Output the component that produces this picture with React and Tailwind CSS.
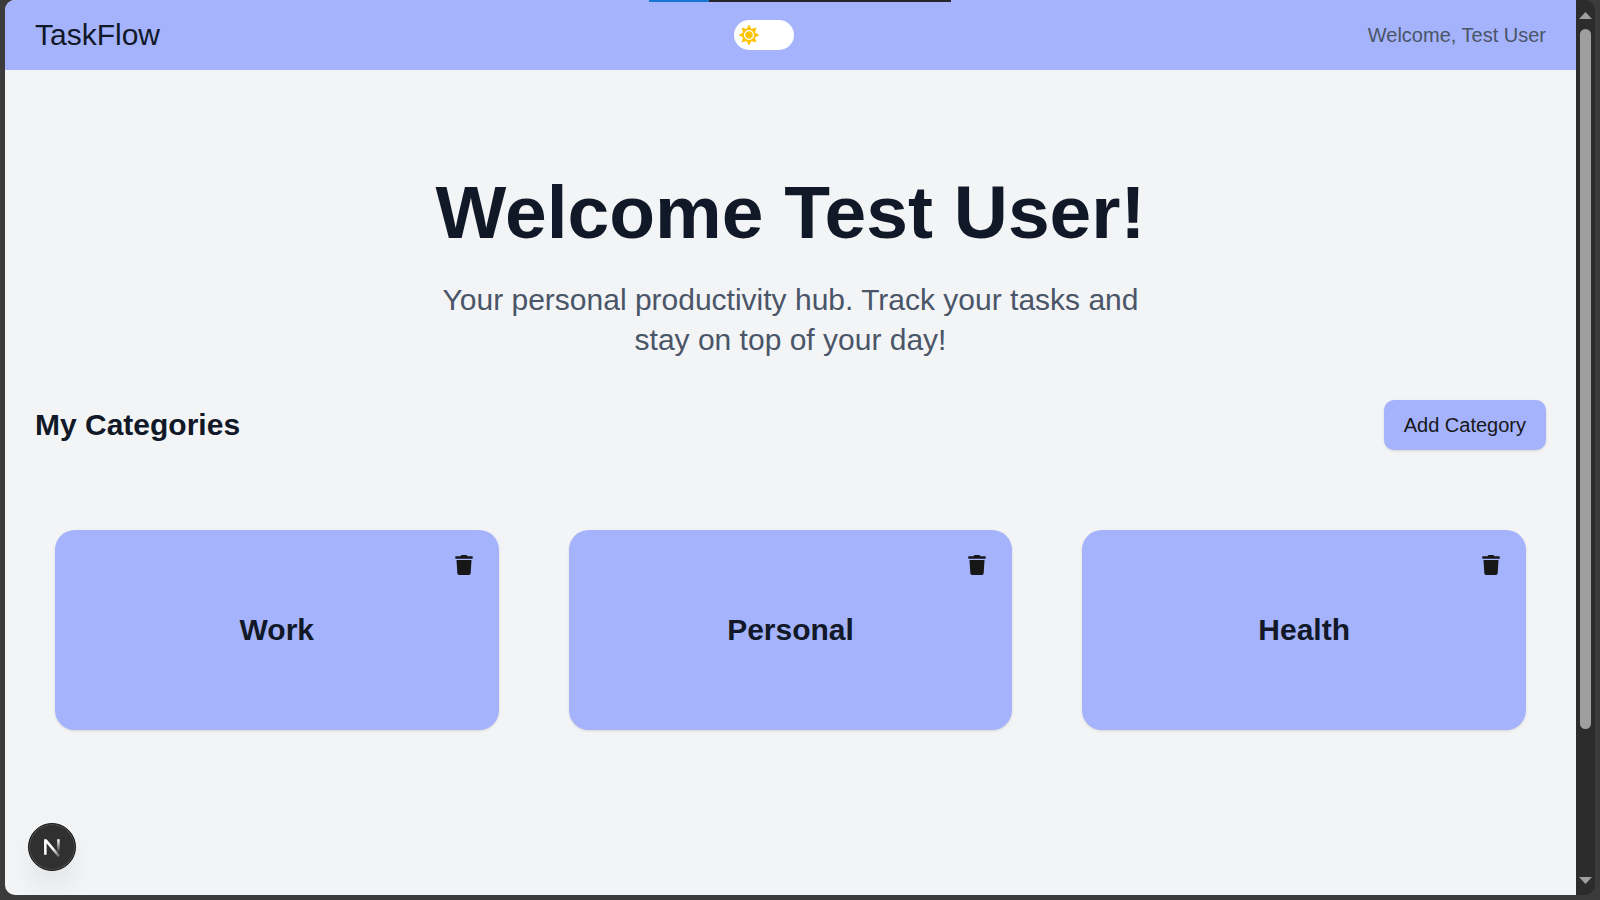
import React from "react";
import { FaSun, FaTrash } from "react-icons/fa";

const categories = ["Work", "Personal", "Health"];

function Header() {
  return (
    <header className="flex h-[70px] items-center justify-between bg-[#a5b3fc] px-[30px]">
      <div className="text-3xl text-[#111827]">TaskFlow</div>
      <button
        type="button"
        role="switch"
        aria-checked="false"
        aria-label="Dark mode"
        className="flex h-[30px] w-[60px] items-center rounded-full bg-white px-[5px]"
      >
        <FaSun className="size-5 text-[#fdc307]" />
      </button>
      <p className="text-xl text-[#4a5568]">Welcome, Test User</p>
    </header>
  );
}

function CategoryCard({ name }) {
  return (
    <article className="relative flex h-[200px] items-center justify-center rounded-[20px] bg-[#a5b3fc] shadow-sm">
      <h3 className="text-3xl font-bold text-[#111827]">{name}</h3>
      <button
        type="button"
        aria-label={`Delete ${name}`}
        className="absolute top-[25px] right-[25px] flex size-5 items-center justify-center text-[#171717]"
      >
        <FaTrash className="size-5" />
      </button>
    </article>
  );
}

function Scrollbar() {
  return (
    <div className="flex w-[19px] shrink-0 flex-col items-center bg-[#2c2c2c] pt-3 pb-[11px]" aria-hidden="true">
      <svg className="h-[7px] w-[13px] shrink-0" viewBox="0 0 13 7">
        <path d="M6.500 0 L13 7 H0Z" fill="#9f9f9f" />
      </svg>
      <div className="mt-2.5 flex w-full grow flex-col items-center">
        <div className="h-[82.500%] w-[11px] rounded-full bg-[#9f9f9f]" />
      </div>
      <svg className="h-[7px] w-[13px] shrink-0" viewBox="0 0 13 7">
        <path d="M0 0 H13 L6.500 7Z" fill="#9f9f9f" />
      </svg>
    </div>
  );
}

function DevBadge() {
  return (
    <button
      type="button"
      aria-label="Open developer tools"
      className="absolute bottom-6 left-[23px] flex size-12 items-center justify-center rounded-full border border-[#171717] bg-[#303030] shadow-[inset_0_0_0_1px_#505050,0_16px_32px_-8px_rgba(0,0,0,0.14)]"
    >
      <svg className="h-[22px] w-[22px]" viewBox="0 0 20 20" fill="none">
        <defs>
          <linearGradient id="stem" x1="0" y1="3" x2="0" y2="15" gradientUnits="userSpaceOnUse">
            <stop stopColor="#fff" />
            <stop offset="1" stopColor="#fff" stopOpacity="0" />
          </linearGradient>
          <linearGradient id="diagonal" x1="11" y1="11" x2="18" y2="19" gradientUnits="userSpaceOnUse">
            <stop stopColor="#fff" />
            <stop offset="1" stopColor="#fff" stopOpacity="0.1" />
          </linearGradient>
        </defs>
        <path d="M2.800 3 H5.100 L17.400 17.800 L15.600 19.300 L5.100 6.600 V17 H2.800Z" fill="url(#diagonal)" />
        <path d="M14.700 3 H17 V14.500 H14.700Z" fill="url(#stem)" />
      </svg>
    </button>
  );
}

export default function App() {
  return (
    <div className="relative flex h-screen bg-[#3b3b3b] px-[5px] pb-[5px] font-['Liberation_Sans',Arial,sans-serif]">
      <div className="flex min-w-0 grow overflow-hidden rounded-[10px]">
        <div className="relative min-w-0 grow overflow-hidden bg-[#f3f4f6]">
          <Header />
          <main className="px-[30px] pt-[105px]">
            <section className="text-center">
              <h1 className="text-[75px] leading-[75px] font-bold text-[#111827]">Welcome Test User!</h1>
              <p className="mx-auto mt-[30px] max-w-[720px] text-3xl leading-10 text-[#4a5568]">
                Your personal productivity hub. Track your tasks and stay on top of your day!
              </p>
            </section>
            <section>
              <div className="mt-10 flex items-center justify-between">
                <h2 className="text-3xl font-bold text-[#111827]">My Categories</h2>
                <button
                  type="button"
                  className="h-[50px] rounded-[10px] bg-[#a5b3fc] px-5 text-xl text-[#171717] shadow-sm"
                >
                  Add Category
                </button>
              </div>
              <div className="grid grid-cols-3 gap-[70px] px-5 pt-20">
                {categories.map((name) => (
                  <CategoryCard key={name} name={name} />
                ))}
              </div>
            </section>
          </main>
          <DevBadge />
        </div>
        <Scrollbar />
      </div>
      <div className="absolute top-0 left-[649px] flex h-0.5 w-[302px] bg-[#25252b]" aria-hidden="true">
        <div className="h-full w-[60px] bg-[#1677d2]" />
      </div>
    </div>
  );
}
